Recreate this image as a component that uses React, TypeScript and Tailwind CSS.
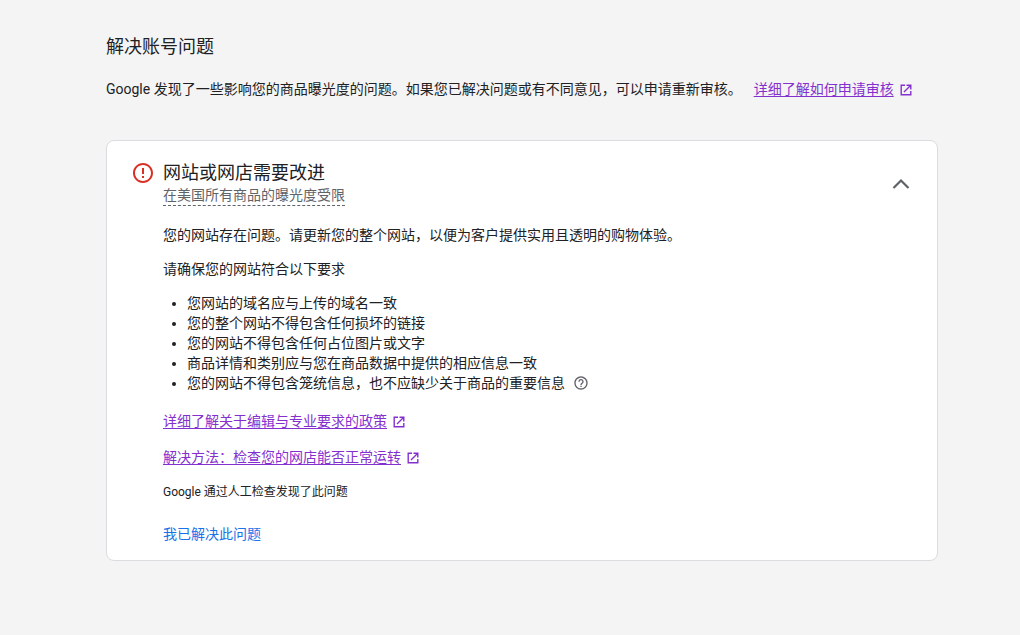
import React, { useState } from 'react';

const requirements = [
  '您网站的域名应与上传的域名一致',
  '您的整个网站不得包含任何损坏的链接',
  '您的网站不得包含任何占位图片或文字',
  '商品详情和类别应与您在商品数据中提供的相应信息一致',
  '您的网站不得包含笼统信息，也不应缺少关于商品的重要信息',
];

function OpenInNewIcon() {
  return (
    <svg viewBox="0 0 12 12" className="mt-px w-3 h-3 shrink-0" fill="none" stroke="currentColor" strokeWidth="1.4" aria-hidden="true">
      <path d="M5 1.2H1.2v9.6h9.6V7M6.5 1.2h4.3v4.3M10.5 1.5L4 8" />
    </svg>
  );
}

function ErrorIcon() {
  return (
    <svg viewBox="0 0 24 24" className="w-6 h-6 shrink-0 text-[#d93025]" fill="currentColor" aria-hidden="true">
      <path d="M11 15h2v2h-2v-2zm0-8h2v6h-2V7zm.99-5C6.47 2 2 6.48 2 12s4.47 10 9.99 10C17.52 22 22 17.52 22 12S17.52 2 11.99 2zM12 20c-4.42 0-8-3.58-8-8s3.58-8 8-8 8 3.58 8 8-3.58 8-8 8z" />
    </svg>
  );
}

function HelpIcon() {
  return (
    <svg viewBox="0 0 24 24" className="w-4 h-4" fill="currentColor" aria-hidden="true">
      <path d="M11 18h2v-2h-2v2zm1-16C6.48 2 2 6.48 2 12s4.48 10 10 10 10-4.48 10-10S17.52 2 12 2zm0 18c-4.41 0-8-3.59-8-8s3.59-8 8-8 8 3.59 8 8-3.59 8-8 8zm0-14c-2.21 0-4 1.79-4 4h2c0-1.1.9-2 2-2s2 .9 2 2c0 2-3 1.75-3 5h2c0-2.25 3-2.5 3-5 0-2.21-1.79-4-4-4z" />
    </svg>
  );
}

function ExternalLink({ children }: { children: React.ReactNode }) {
  return (
    <a href="#" className="inline-flex items-center gap-1.5 text-[#8430ce]">
      <span className="underline underline-offset-2">{children}</span>
      <OpenInNewIcon />
    </a>
  );
}

export default function App() {
  const [open, setOpen] = useState(true);

  return (
    <main className="min-h-screen bg-[#f4f4f4] pt-[35px] pb-16 pl-[106px] pr-[82px] text-sm text-[#202124] font-[Roboto,'Noto_Sans_CJK_SC',sans-serif]" lang="zh-CN">
      <h1 className="text-lg leading-6">解决账号问题</h1>
      <div className="mt-5 flex flex-wrap items-center gap-x-3 leading-5">
        <p>Google 发现了一些影响您的商品曝光度的问题。如果您已解决问题或有不同意见，可以申请重新审核。</p>
        <ExternalLink>详细了解如何申请审核</ExternalLink>
      </div>

      <section className="mt-[41px] rounded-lg border border-[#dadce0] bg-white pt-5 pb-4 pl-6 pr-5">
        <header className="flex items-center justify-between">
          <div className="flex items-start gap-2">
            <ErrorIcon />
            <div>
              <h2 className="text-lg leading-6">网站或网店需要改进</h2>
              <p className="w-fit border-b border-dashed border-[#5f6368] leading-5 text-[#5f6368]">
                在美国所有商品的曝光度受限
              </p>
            </div>
          </div>
          <button
            type="button"
            aria-label="收起"
            aria-expanded={open}
            onClick={() => setOpen(!open)}
            className="text-[#5f6368]"
          >
            <svg viewBox="0 0 32 32" className={open ? 'w-8 h-8' : 'w-8 h-8 rotate-180'} fill="none" stroke="currentColor" strokeWidth="2.2">
              <path d="M8.5 20L16 12.5l7.5 7.5" />
            </svg>
          </button>
        </header>

        {open && (
          <div className="pl-8 pt-[19px] leading-5">
            <p>您的网站存在问题。请更新您的整个网站，以便为客户提供实用且透明的购物体验。</p>
            <p className="mt-3.5">请确保您的网站符合以下要求</p>
            <ul className="mt-3.5 list-disc pl-6">
              {requirements.map((item, i) => (
                <li key={item}>
                  {item}
                  {i === requirements.length - 1 && (
                    <button type="button" aria-label="帮助" className="ml-2 align-text-top text-[#5f6368]">
                      <HelpIcon />
                    </button>
                  )}
                </li>
              ))}
            </ul>
            <div className="mt-[18px] flex flex-col items-start gap-4">
              <ExternalLink>详细了解关于编辑与专业要求的政策</ExternalLink>
              <ExternalLink>解决方法：检查您的网店能否正常运转</ExternalLink>
            </div>
            <p className="mt-[15px] text-xs leading-5">Google 通过人工检查发现了此问题</p>
            <button type="button" className="mt-[22px] block text-[#1a73e8]">我已解决此问题</button>
          </div>
        )}
      </section>
    </main>
  );
}
